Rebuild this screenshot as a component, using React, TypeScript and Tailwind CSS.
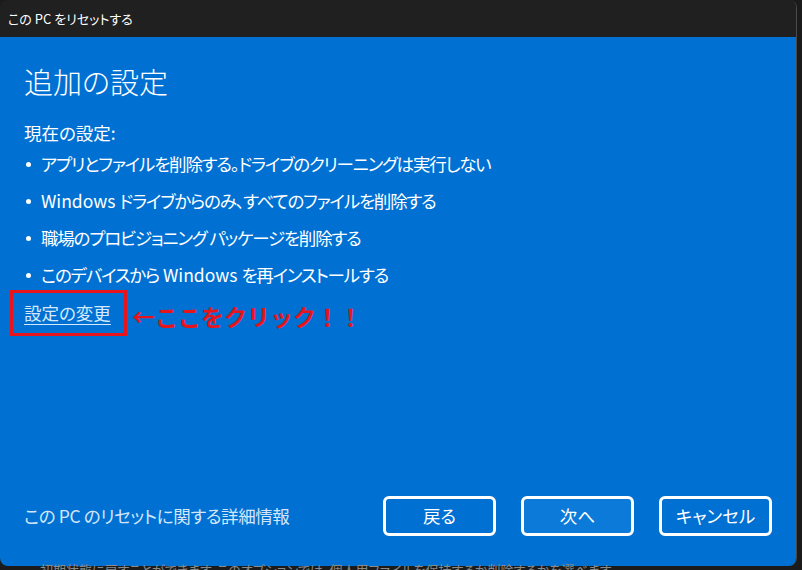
import React from "react";

const font = { fontFamily: "'Noto Sans CJK JP', 'Noto Sans', sans-serif" };

function Line({ text }: { text: string }) {
  const parts = text.split(/( ?Windows ?)/);
  return (
    <span className="tracking-[-1.2px] whitespace-pre">
      {parts.map((p, i) =>
        p.includes("Windows") ? (
          <span key={i} className="tracking-normal">
            {p}
          </span>
        ) : (
          <span key={i}>{p}</span>
        )
      )}
    </span>
  );
}

export default function App() {
  const bullets = [
    "アプリとファイルを削除する。ドライブのクリーニングは実行しない",
    "Windows ドライブからのみ、すべてのファイルを削除する",
    "職場のプロビジョニング パッケージを削除する",
    "このデバイスから Windows を再インストールする",
  ];
  return (
    <div
      className="w-[802px] h-[570px] bg-[#1b1b1b] overflow-hidden flex flex-col [font-feature-settings:'palt']"
      style={font}
    >
      <div className="w-[797px] h-[566px] shrink-0 flex flex-col rounded-lg overflow-hidden border-r border-[#4a4a4a]">
        <div className="h-[37px] shrink-0 bg-[#202020] flex items-center px-2 text-[13px] text-white">
          この PC をリセットする
        </div>
        <div className="flex-1 bg-[#0071d3] flex flex-col px-6 pt-[24px] pb-[30px] text-white">
          <h1 className="text-[29px] leading-[40px] font-light">追加の設定</h1>
          <p className="mt-[19px] text-[17.5px] leading-[26px]">現在の設定:</p>
          <ul className="mt-[5px] flex flex-col gap-[11px]">
            {bullets.map((b) => (
              <li key={b} className="flex items-center text-[17.5px] leading-[26px]">
                <span className="w-[17px] flex items-center">
                  <span className="ml-[2px] w-[5px] h-[5px] rounded-full bg-white" />
                </span>
                <Line text={b} />
              </li>
            ))}
          </ul>
          <div className="mt-[12px] flex items-start">
            <div className="relative">
              <span className="text-[17.5px] leading-[26px] text-[#d6e9fb] underline underline-offset-4">
                設定の変更
              </span>
              <div className="absolute left-[-14px] top-[-10px] w-[117px] h-[46px] border-[3px] border-[#e8141c]" />
            </div>
            <span className="ml-[21px] mt-[1px] text-[23px] leading-[30px] font-bold text-[#e8141c] [font-feature-settings:normal]">
              ←ここをクリック！！
            </span>
          </div>
          <div className="mt-auto flex items-center">
            <span className="text-[17.5px] tracking-[-0.4px] text-[#d3e6f8]">
              この PC のリセットに関する詳細情報
            </span>
            <div className="ml-auto flex gap-[25px] text-[17.5px]">
              <button className="w-[113px] h-[40px] rounded-md border-[3px] border-white bg-[#0071d3] text-white">
                戻る
              </button>
              <button className="w-[113px] h-[40px] rounded-md border-[3px] border-white bg-[#0b7ad8] text-white">
                次へ
              </button>
              <button className="w-[113px] h-[40px] rounded-md border-[3px] border-white bg-[#0071d3] text-white">
                キャンセル
              </button>
            </div>
          </div>
        </div>
      </div>
      <div className="pl-[40px] -mt-[6px] text-[13px] text-[#8a8a8a] whitespace-nowrap">
        初期状態に戻すことができます。このオプションでは、個人用ファイルを保持するか削除するかを選べます
      </div>
    </div>
  );
}
